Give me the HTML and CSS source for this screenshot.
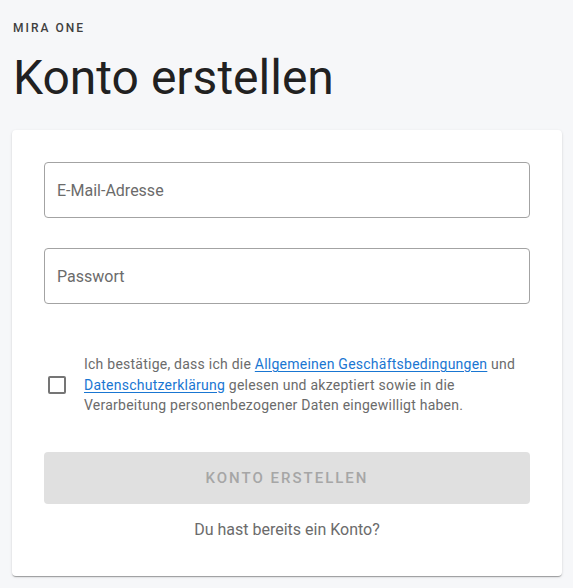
FILE: index.html
```html
<!DOCTYPE html>
<html lang="de">
<head>
<meta charset="utf-8">
<title>Konto erstellen</title>
<link rel="stylesheet" href="styles.css">
</head>
<body>
<main class="page">
  <div class="brand">MIRA ONE</div>
  <h1 class="title">Konto erstellen</h1>
  <section class="card">
    <div class="field"><span class="field-label">E-Mail-Adresse</span></div>
    <div class="field field-second"><span class="field-label">Passwort</span></div>
    <div class="consent">
      <span class="checkbox"></span>
      <p class="consent-text">Ich bestätige, dass ich die <a href="#" class="link">Allgemeinen Geschäftsbedingungen</a> und <a href="#" class="link">Datenschutzerklärung</a> gelesen und akzeptiert sowie in die Verarbeitung personenbezogener Daten eingewilligt haben.</p>
    </div>
    <button class="submit" type="button" disabled>KONTO ERSTELLEN</button>
    <p class="login">Du hast bereits ein Konto?</p>
  </section>
</main>
</body>
</html>
```
FILE: styles.css
```css
* { box-sizing: border-box; }
html, body { margin: 0; padding: 0; }
body {
  background: #f6f7f9;
  font-family: Roboto, "Liberation Sans", Arial, sans-serif;
  color: #212121;
}
.page {
  padding: 20px 11px 12px 12px;
}
.brand {
  font-size: 12px;
  font-weight: 500;
  letter-spacing: 2px;
  line-height: 16px;
  color: #3f3f3f;
  padding-left: 1px;
}
.title {
  margin: 14px 0 0 0;
  font-size: 48px;
  font-weight: 400;
  line-height: 56px;
  color: #212121;
  padding-left: 1px;
}
.card {
  margin-top: 24px;
  background: #fff;
  border-radius: 4px;
  box-shadow: 0 2px 1px -1px rgba(0,0,0,0.2), 0 1px 1px 0 rgba(0,0,0,0.14), 0 1px 3px 0 rgba(0,0,0,0.12);
  padding: 32px 32px 35px 32px;
  display: flex;
  flex-direction: column;
}
.field {
  height: 56px;
  border: 1px solid #a3a3a3;
  border-radius: 4px;
  display: flex;
  align-items: center;
  padding-left: 12px;
}
.field-second { margin-top: 30px; }
.field-label {
  font-size: 16px;
  color: #6b6b6b;
}
.consent {
  margin-top: 50px;
  display: flex;
  align-items: center;
  gap: 18px;
  padding-left: 4px;
}
.checkbox {
  flex: none;
  width: 18px;
  height: 18px;
  border: 2px solid #757575;
  border-radius: 2px;
}
.consent-text {
  margin: 0;
  font-size: 14px;
  line-height: 20.5px;
  letter-spacing: 0.24px;
  color: #6b6b6b;
}
.link {
  color: #1976d2;
  text-decoration: underline;
  text-underline-offset: 2px;
}
.submit {
  margin-top: 36px;
  height: 52px;
  border: 0;
  border-radius: 4px;
  background: #e0e0e0;
  color: #a6a6a6;
  font-family: inherit;
  font-size: 15px;
  font-weight: 500;
  letter-spacing: 2px;
}
.login {
  margin: 15px 0 0 0;
  text-align: center;
  font-size: 16px;
  line-height: 22px;
  color: #6b6b6b;
}
```
